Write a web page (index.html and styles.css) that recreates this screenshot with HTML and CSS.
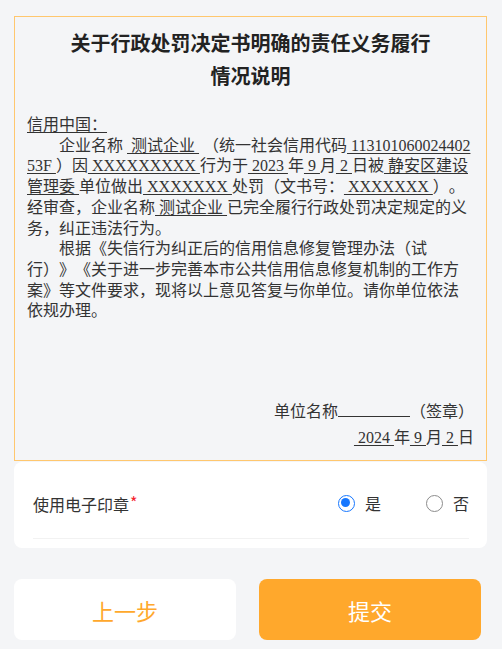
FILE: index.html
```html
<!DOCTYPE html>
<html lang="zh-CN">
<head>
<meta charset="utf-8">
<title>情况说明</title>
<link rel="stylesheet" href="styles.css">
</head>
<body>
<div class="page">
  <div class="doc">
    <h1 class="doc-title">关于行政处罚决定书明确的责任义务履行<br>情况说明</h1>
    <div class="doc-body">
      <p class="salute"><span class="u">信用中国：</span></p>
      <p class="para">企业名称 <span class="u">&nbsp;测试企业&nbsp;</span> （统一社会信用代码<span class="u">&nbsp;11310106002440253F&nbsp;</span>）因<span class="u">&nbsp;XXXXXXXXX&nbsp;</span>行为于<span class="u">&nbsp;2023&nbsp;</span>年<span class="u">&nbsp;9&nbsp;</span>月<span class="u">&nbsp;2&nbsp;</span>日被<span class="u">&nbsp;静安区建设管理委&nbsp;</span>单位做出<span class="u">&nbsp;XXXXXXX&nbsp;</span>处罚（文书号：<span class="u">&nbsp;XXXXXXX&nbsp;</span>）。<span class="noind">经审查，企业名称<span class="u">&nbsp;测试企业&nbsp;</span>已完全履行行政处罚决定规定的义务，纠正违法行为。</span></p>
      <p class="para">根据《失信行为纠正后的信用信息修复管理办法（试行）》《关于进一步完善本市公共信用信息修复机制的工作方案》等文件要求，现将以上意见答复与你单位。请你单位依法依规办理。</p>
    </div>
    <div class="sign">
      <p class="sign-line">单位名称<span class="blank"></span>（签章）</p>
      <p class="sign-line"><span class="u">&nbsp;2024&nbsp;</span>年<span class="u">&nbsp;9&nbsp;</span>月<span class="u">&nbsp;2&nbsp;</span>日</p>
    </div>
  </div>

  <div class="card">
    <div class="field">
      <span class="field-label">使用电子印章<span class="req">*</span></span>
      <div class="radios">
        <label class="radio"><span class="dot checked"></span><span class="radio-text">是</span></label>
        <label class="radio"><span class="dot"></span><span class="radio-text">否</span></label>
      </div>
    </div>
  </div>

  <div class="actions">
    <button class="btn btn-prev">上一步</button>
    <button class="btn btn-submit">提交</button>
  </div>
</div>
</body>
</html>
```

FILE: styles.css
```css
html, body {
  margin: 0;
  padding: 0;
  background: #ffffff;
}

.page {
  height: 649px;
  box-sizing: border-box;
  background: #f4f5f7;
  padding: 16px 15px 0 14px;
  font-family: "Noto Sans CJK SC", "Noto Sans", sans-serif;
  color: #333333;
  text-spacing-trim: space-all;
}

.doc {
  border: 1px solid #ffc76e;
  padding: 10px 12px 9px 12px;
  font-family: "Liberation Serif", "Noto Sans CJK SC", serif;
  color: #333333;
  text-spacing-trim: space-all;
}

.doc-title {
  margin: 0;
  text-align: center;
  font-family: "Noto Sans CJK SC", sans-serif;
  font-size: 20px;
  font-weight: 700;
  line-height: 32.5px;
  color: #222222;
}

.doc-body {
  margin-top: 23px;
  font-size: 16px;
  line-height: 20.7px;
  word-break: break-all;
}

.doc-body p {
  margin: 0;
}

.para {
  text-indent: 32px;
}

.noind {
  display: block;
  text-indent: 0;
}

.u {
  text-decoration: underline;
  text-decoration-thickness: 1px;
  text-underline-offset: 2px;
}

.sign {
  margin-top: 77px;
  text-align: right;
  font-size: 16px;
  line-height: 26px;
}

.sign-line {
  margin: 0;
}

.blank {
  display: inline-block;
  width: 72px;
  height: 15px;
  border-bottom: 1px solid #333333;
  vertical-align: baseline;
}

.card {
  margin-top: 1px;
  background: #ffffff;
  border-radius: 8px;
  padding: 0 18px 9px 19px;
}

.field {
  display: flex;
  align-items: center;
  justify-content: space-between;
  padding: 28px 0 22px;
  border-bottom: 1px solid #f2f2f2;
  line-height: 24px;
}

.field-label {
  font-size: 16px;
  color: #333333;
}

.req {
  color: #f5222d;
  font-size: 16px;
  vertical-align: 2px;
  margin-left: 1px;
}

.radios {
  display: flex;
  align-items: center;
  gap: 45px;
}

.radio {
  display: flex;
  align-items: center;
  gap: 10px;
  font-size: 16px;
  color: #333333;
}

.dot {
  box-sizing: border-box;
  width: 17px;
  height: 17px;
  border-radius: 50%;
  border: 1px solid #8c8c8c;
  background: #ffffff;
  position: relative;
}

.dot.checked {
  border: 1.5px solid #1677ff;
}

.dot.checked::after {
  content: "";
  position: absolute;
  left: 2.5px;
  top: 2.5px;
  width: 9px;
  height: 9px;
  border-radius: 50%;
  background: #1677ff;
}

.actions {
  margin-top: 31px;
  display: flex;
  gap: 23px;
  width: 467px;
}

.btn {
  flex: 1;
  height: 61px;
  border: none;
  border-radius: 8px;
  font-family: "Noto Sans CJK SC", sans-serif;
  font-size: 22px;
  cursor: pointer;
}

.btn-prev {
  background: #ffffff;
  color: #ffa82c;
}

.btn-submit {
  background: #ffa82c;
  color: #ffffff;
}
```
